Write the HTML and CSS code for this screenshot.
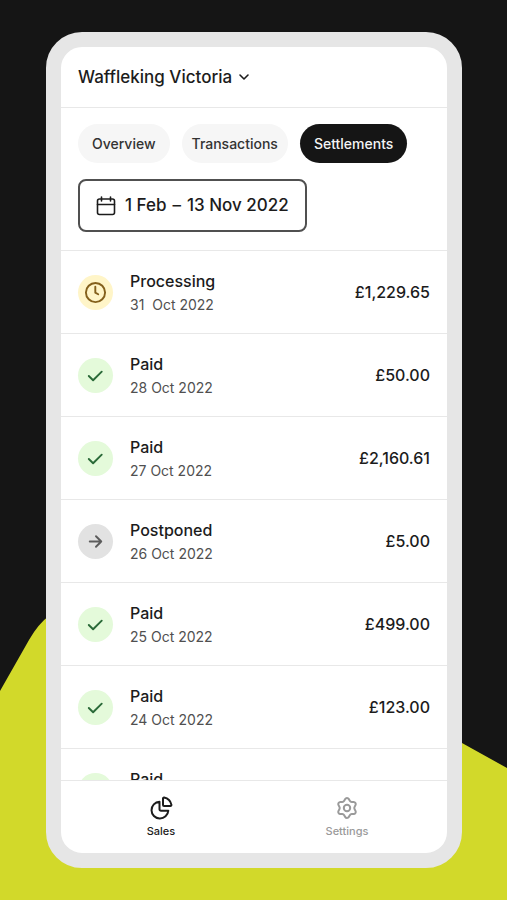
FILE: index.html
```html
<!DOCTYPE html>
<html lang="en">
<head>
<meta charset="utf-8">
<meta name="viewport" content="width=device-width, initial-scale=1">
<title>Settlements</title>
<link rel="stylesheet" href="styles.css">
</head>
<body>
<svg class="backdrop" viewBox="0 0 507 900" preserveAspectRatio="none" aria-hidden="true">
  <path d="M0 691 L29 640 Q38 624 50 615 L300 655 L462 743 L507 768 V900 H0 Z"/>
</svg>
<svg class="sprite" aria-hidden="true">
  <symbol id="check" viewBox="0 0 24 24"><path d="M5 12.500 9.500 17 18.500 8"/></symbol>
  <symbol id="clock" viewBox="0 0 24 24"><circle cx="12" cy="12" r="10"/><path d="M11.800 6v6.200l3 1.600"/></symbol>
  <symbol id="arrow" viewBox="0 0 24 24"><path d="M6 12h12M12.500 6.500l5.500 5.500-5.500 5.500"/></symbol>
</svg>
<div class="phone">
  <header class="header">
    <button class="store" type="button">Waffleking Victoria
      <svg class="chevron" viewBox="0 0 12 12" aria-hidden="true"><path d="M2 4l4 4 4-4"/></svg>
    </button>
  </header>
  <section class="filters">
    <nav class="tabs" aria-label="Sales views">
      <button class="tab" type="button">Overview</button>
      <button class="tab tab-snug" type="button">Transactions</button>
      <button class="tab tab-active" type="button" aria-current="page">Settlements</button>
    </nav>
    <button class="range" type="button">
      <svg class="calendar" viewBox="0 0 20 20" aria-hidden="true"><rect x="1.5" y="3" width="17" height="15.5" rx="2"/><path d="M1.5 8.5h17M5.5 1v4M14.5 1v4"/></svg>
      <span class="dates"><span>1 Feb</span><span>–</span><span>13 Nov 2022</span></span>
    </button>
  </section>
  <ul class="list">
    <li class="row">
      <span class="status status-processing"><svg class="icon" aria-hidden="true"><use href="#clock"/></svg></span>
      <div class="info"><strong class="title">Processing</strong><span class="date">31&nbsp; Oct 2022</span></div>
      <span class="amount">£1,229.65</span>
    </li>
    <li class="row">
      <span class="status status-paid"><svg class="icon" aria-hidden="true"><use href="#check"/></svg></span>
      <div class="info"><strong class="title">Paid</strong><span class="date">28 Oct 2022</span></div>
      <span class="amount">£50.00</span>
    </li>
    <li class="row">
      <span class="status status-paid"><svg class="icon" aria-hidden="true"><use href="#check"/></svg></span>
      <div class="info"><strong class="title">Paid</strong><span class="date">27 Oct 2022</span></div>
      <span class="amount">£2,160.61</span>
    </li>
    <li class="row">
      <span class="status status-postponed"><svg class="icon" aria-hidden="true"><use href="#arrow"/></svg></span>
      <div class="info"><strong class="title">Postponed</strong><span class="date">26 Oct 2022</span></div>
      <span class="amount">£5.00</span>
    </li>
    <li class="row">
      <span class="status status-paid"><svg class="icon" aria-hidden="true"><use href="#check"/></svg></span>
      <div class="info"><strong class="title">Paid</strong><span class="date">25 Oct 2022</span></div>
      <span class="amount">£499.00</span>
    </li>
    <li class="row">
      <span class="status status-paid"><svg class="icon" aria-hidden="true"><use href="#check"/></svg></span>
      <div class="info"><strong class="title">Paid</strong><span class="date">24 Oct 2022</span></div>
      <span class="amount">£123.00</span>
    </li>
    <li class="row">
      <span class="status status-paid"></span>
      <div class="info"><strong class="title">Paid</strong></div>
    </li>
  </ul>
  <nav class="bottom" aria-label="Main">
    <a class="link link-active" href="#sales" aria-current="page">
      <svg class="nav-icon" viewBox="0 0 24 24" aria-hidden="true"><path d="M10.500 5.700a8.400 8.400 0 1 0 8.800 9h-7.300a1.500 1.500 0 0 1-1.500-1.500z"/><path d="M14 2.600c0-.7.5-1.100 1.100-1 4 .8 6.500 3.300 7.300 7.200.1.600-.300 1.200-1 1.200H15a1 1 0 0 1-1-1z"/></svg>
      Sales
    </a>
    <a class="link" href="#settings">
      <svg class="nav-icon" viewBox="0 0 24 24" aria-hidden="true"><path d="M10.200 2c.7-1.300 2.900-1.300 3.600 0l1 1.800c.4.700 1.100 1.100 1.900 1.100h1.900c1.600 0 2.700 1.700 1.900 3.200l-.9 1.700c-.4.700-.4 1.700 0 2.400l.9 1.700c.8 1.500-.3 3.200-1.900 3.200h-1.900c-.8 0-1.500.4-1.900 1.100l-1 1.800c-.7 1.300-2.900 1.300-3.600 0l-1-1.800c-.4-.7-1.100-1.100-1.900-1.100H5.400c-1.600 0-2.700-1.700-1.900-3.200l.9-1.700c.4-.7.4-1.700 0-2.400l-.9-1.700C2.700 6.600 3.800 4.900 5.400 4.900h1.900c.8 0 1.500-.4 1.900-1.100z" transform="translate(0 1)"/><circle cx="12" cy="12" r="3.200"/></svg>
      Settings
    </a>
  </nav>
</div>
</body>
</html>
```

FILE: styles.css
```css
* { box-sizing: border-box; }

body {
  margin: 0;
  height: 100vh;
  padding: 32px 45px 32px 46px;
  display: flex;
  background: #151515;
  color: #1c1c1c;
  font-family: Inter, "Liberation Sans", sans-serif;
  font-size: 16px;
  font-weight: 550;
}

button {
  font: inherit;
  color: inherit;
  background: none;
  border: 0;
  padding: 0;
}

svg {
  fill: none;
  stroke: currentColor;
  stroke-width: 2;
  stroke-linecap: round;
  stroke-linejoin: round;
}

.backdrop {
  position: absolute;
  inset: 0;
  width: 100%;
  height: 100%;
  z-index: -1;
  stroke: none;
  fill: #d2d92a;
}

.sprite {
  position: absolute;
  width: 0;
  height: 0;
}

.phone {
  flex: 1;
  min-width: 0;
  display: flex;
  flex-direction: column;
  background: #fff;
  border: 15px solid #e6e6e6;
  border-radius: 36px;
  overflow: hidden;
}

.header {
  padding: 20px 17px;
  border-bottom: 1px solid #e8e8e8;
}

.store {
  display: flex;
  align-items: center;
  gap: 6px;
  font-size: 17px;
  font-weight: 500;
  line-height: 20px;
}

.chevron { width: 12px; height: 12px; stroke-width: 1.6; }

.filters { padding: 16px 17px 18px; }

.tabs {
  display: flex;
  gap: 12px;
  margin-bottom: 16px;
}

.tab {
  padding: 0 14px;
  line-height: 39px;
  border-radius: 20px;
  background: #f6f6f6;
  color: #333;
  font-size: 14px;
  font-weight: 500;
}

.tab-snug { padding: 0 10px; }

.tab-active { background: #151515; color: #f4f4f4; }

.range {
  display: flex;
  align-items: center;
  gap: 9px;
  padding: 0 16px;
  line-height: 49px;
  border: 2px solid #505050;
  border-radius: 8px;
  font-size: 17px;
  font-weight: 500;
}

.calendar { width: 20px; height: 20px; stroke-width: 1.6; }

.dates { display: flex; gap: 6px; }

.list {
  flex: 1 1 0;
  min-height: 0;
  overflow: hidden;
  margin: 0;
  padding: 0;
  list-style: none;
}

.row {
  display: flex;
  align-items: center;
  gap: 17px;
  height: 83px;
  padding: 0 17px;
  border-top: 1px solid #e8e8e8;
}

.status {
  display: flex;
  align-items: center;
  justify-content: center;
  width: 35px;
  height: 35px;
  border-radius: 50%;
}

.status-processing { background: #fff5c8; color: #84601c; }
.status-paid { background: #e4fada; color: #2a6a38; }
.status-postponed { background: #e2e2e2; color: #5c5c5c; }

.icon { width: 23px; height: 23px; }

.info {
  flex: 1;
  display: flex;
  flex-direction: column;
}

.title { font-weight: 550; line-height: 24px; }

.date {
  color: #505050;
  font-size: 14px;
  font-weight: 400;
  line-height: 23px;
}

.row:last-child .info { padding-bottom: 23px; }

.bottom {
  display: grid;
  grid-template-columns: 1fr 1fr;
  padding: 15px 7px 14px;
  border-top: 1px solid #e8e8e8;
}

.link {
  display: flex;
  flex-direction: column;
  align-items: center;
  gap: 4px;
  color: #9a9a9a;
  font-size: 11px;
  font-weight: 500;
  line-height: 15px;
  text-decoration: none;
}

.link-active { color: #1c1c1c; font-weight: 550; }

.nav-icon { width: 24px; height: 24px; }
```
